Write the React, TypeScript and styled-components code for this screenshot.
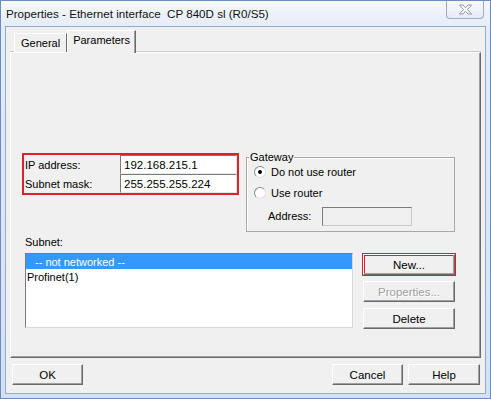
import React from "react";
import styled, { createGlobalStyle } from "styled-components";

// ---------------------------------------------------------------------------
// Global
// ---------------------------------------------------------------------------

const GlobalStyle = createGlobalStyle`
  html, body {
    margin: 0;
    padding: 0;
    background: #ffffff;
  }
  * {
    box-sizing: border-box;
  }
`;

const UI_FONT = `"Liberation Sans", Arial, sans-serif`;

// ---------------------------------------------------------------------------
// Window chrome
// ---------------------------------------------------------------------------

const Window = styled.div`
  width: 491px;
  height: 399px;
  display: flex;
  flex-direction: column;
  border: 1px solid #6a8cc2;
  padding: 0 4px 4px 4px;
  background: linear-gradient(to bottom, #f6f8fc 0, #e4ecf7 26px, #d4e1f2 100%);
  font-family: ${UI_FONT};
  font-size: 11px;
  color: #000;
`;

const TitleBar = styled.div`
  height: 25px;
  flex-shrink: 0;
  display: flex;
  align-items: center;
  padding-left: 1px;
`;

const TitleText = styled.span`
  font-size: 11.6px;
  color: #111;
  white-space: pre;
`;

const CloseButton = styled.div`
  margin-left: auto;
  margin-right: 2px;
  align-self: flex-start;
  width: 38px;
  height: 18px;
  display: flex;
  align-items: center;
  justify-content: center;
  border: 1px solid #99adc9;
  border-top: none;
  border-radius: 0 0 4px 4px;
  background: linear-gradient(to bottom, #f9fafd, #e6ecf5);
`;

const Client = styled.div`
  flex: 1;
  display: flex;
  flex-direction: column;
  background: #f0f0f0;
  border: 1px solid #92abcf;
  padding: 3px 4px 6px 4px;
`;

// ---------------------------------------------------------------------------
// Tabs
// ---------------------------------------------------------------------------

const TabStrip = styled.div`
  height: 22px;
  display: flex;
  align-items: flex-end;
  padding-left: 4px;
`;

const Tab = styled.div<{ $active?: boolean }>`
  height: ${(p) => (p.$active ? "23px" : "19px")};
  padding: ${(p) => (p.$active ? "0 5px 5px 5px" : "0 6px 1px 6px")};
  display: flex;
  align-items: center;
  background: #f0f0f0;
  border-top: 1px solid #ffffff;
  border-left: 1px solid #ffffff;
  border-right: 1px solid #696969;
  box-shadow: inset -1px 0 0 #a0a0a0, ${(p) => (p.$active ? "0 1px 0 #f0f0f0" : "none")};
  position: relative;
  z-index: ${(p) => (p.$active ? 1 : 0)};
  margin-bottom: ${(p) => (p.$active ? "-1px" : "0")};
`;

const TabPanel = styled.div`
  height: 306px;
  flex-shrink: 0;
  border-top: 1px solid #ffffff;
  border-left: 1px solid #ffffff;
  border-right: 1px solid #696969;
  border-bottom: 1px solid #696969;
  box-shadow: inset -1px -1px 0 #a0a0a0, 0 -1px 0 #c9c9c9;
  padding: 100px 0 0 11px;
  display: flex;
  flex-direction: column;
`;

// ---------------------------------------------------------------------------
// Address section
// ---------------------------------------------------------------------------

const TopRow = styled.div`
  display: flex;
  align-items: flex-start;
`;

const AddressBox = styled.div`
  width: 217px;
  height: 42px;
  border: 2px solid #d8232a;
  display: grid;
  grid-template-columns: 96px 117px;
  grid-template-rows: 19px 19px;
`;

const FieldLabel = styled.div`
  display: flex;
  align-items: center;
  padding-left: 1px;
`;

const TextInput = styled.div<{ $disabled?: boolean }>`
  display: flex;
  align-items: center;
  padding-left: 3px;
  background: ${(p) => (p.$disabled ? "#f0f0f0" : "#ffffff")};
  border-top: 1px solid #7a7a7a;
  border-left: 1px solid #7a7a7a;
  border-right: 1px solid ${(p) => (p.$disabled ? "#c8c8c8" : "#e8e8e8")};
  border-bottom: 1px solid ${(p) => (p.$disabled ? "#c8c8c8" : "#e8e8e8")};
  font-size: 11.5px;
`;

const GroupBox = styled.fieldset`
  margin: -2px 0 0 7px;
  width: 209px;
  height: 81px;
  border: 1px solid #a8a8a8;
  box-shadow: inset 1px 1px 0 #ffffff;
  padding: 0 0 0 7px;
  display: flex;
  flex-direction: column;
`;

const GroupLegend = styled.legend`
  margin-left: -5px;
  padding: 0 1px;
  line-height: 13px;
`;

const RadioRow = styled.label<{ $first?: boolean }>`
  height: 16px;
  margin-top: ${(p) => (p.$first ? "0" : "5px")};
  display: flex;
  align-items: center;
  gap: 5px;
`;

const RadioCircle = styled.span<{ $checked?: boolean }>`
  width: 12px;
  height: 12px;
  border-radius: 50%;
  background: #ffffff;
  border: 1px solid #8a8a8a;
  border-right-color: #e0e0e0;
  border-bottom-color: #e0e0e0;
  display: flex;
  align-items: center;
  justify-content: center;
  &::after {
    content: "";
    width: 4px;
    height: 4px;
    border-radius: 50%;
    background: ${(p) => (p.$checked ? "#000000" : "transparent")};
  }
`;

const AddressRow = styled.div`
  height: 20px;
  margin-top: 5px;
  display: flex;
  align-items: center;
  padding-left: 14px;
`;

const AddressLabel = styled.span`
  width: 54px;
`;

const AddressInput = styled(TextInput)`
  width: 90px;
  height: 19px;
`;

// ---------------------------------------------------------------------------
// Subnet section
// ---------------------------------------------------------------------------

const SubnetLabel = styled.div`
  margin: 4px 0 0 3px;
  line-height: 13px;
`;

const SubnetRow = styled.div`
  display: flex;
  align-items: flex-start;
  margin: 4px 0 0 3px;
`;

const ListBox = styled.div`
  width: 328px;
  height: 75px;
  background: #ffffff;
  border-top: 1px solid #7a7a7a;
  border-left: 1px solid #7a7a7a;
  border-right: 1px solid #dadada;
  border-bottom: 1px solid #dadada;
  display: flex;
  flex-direction: column;
`;

const ListItem = styled.div<{ $selected?: boolean }>`
  height: 15px;
  display: flex;
  align-items: center;
  padding-left: ${(p) => (p.$selected ? "9px" : "1px")};
  background: ${(p) => (p.$selected ? "#3399ff" : "transparent")};
  color: ${(p) => (p.$selected ? "#ffffff" : "#000000")};
  font-size: 11px;
`;

const ButtonColumn = styled.div`
  margin-left: 10px;
  display: flex;
  flex-direction: column;
  gap: 6px;
  margin-top: 1px;
`;

const Button = styled.div<{ $width?: number; $disabled?: boolean; $marked?: boolean }>`
  width: ${(p) => p.$width ?? 92}px;
  height: 21px;
  display: flex;
  align-items: center;
  justify-content: center;
  background: #f0f0f0;
  border-top: 1px solid #ffffff;
  border-left: 1px solid #ffffff;
  border-right: 1px solid #696969;
  border-bottom: 1px solid #696969;
  box-shadow: inset -1px -1px 0 #a0a0a0
    ${(p) => (p.$marked ? ", 0 0 0 1px #d8232a, inset 0 0 0 1px #d8232a" : "")};
  outline: ${(p) => (p.$marked ? "1px solid #d8232a" : "none")};
  color: ${(p) => (p.$disabled ? "#a0a0a0" : "#000000")};
  text-shadow: ${(p) => (p.$disabled ? "1px 1px 0 #ffffff" : "none")};
  font-size: 11.5px;
`;

// ---------------------------------------------------------------------------
// Dialog buttons
// ---------------------------------------------------------------------------

const DialogButtons = styled.div`
  margin-top: 6px;
  display: flex;
  align-items: center;
  gap: 5px;
  padding: 0 1px 0 2px;
`;

const Spacer = styled.div`
  flex: 1;
`;

function CloseGlyph() {
  return (
    <svg width="15" height="11" viewBox="0 0 15 11" aria-hidden="true">
      <path
        d="M1.5 1 H5 L7.5 3.8 L10 1 H13.5 L9.5 5.5 L13.5 10 H10 L7.5 7.2 L5 10 H1.5 L5.5 5.5 Z"
        fill="#ffffff"
        stroke="#7b8aa0"
        strokeWidth="0.9"
        strokeLinejoin="round"
      />
    </svg>
  );
}

// ---------------------------------------------------------------------------
// App
// ---------------------------------------------------------------------------

export default function App() {
  return (
    <>
      <GlobalStyle />
      <Window>
        <TitleBar>
          <TitleText>Properties - Ethernet interface  CP 840D sl (R0/S5)</TitleText>
          <CloseButton>
            <CloseGlyph />
          </CloseButton>
        </TitleBar>

        <Client>
          <TabStrip>
            <Tab>General</Tab>
            <Tab $active>Parameters</Tab>
          </TabStrip>

          <TabPanel>
            <TopRow>
              <AddressBox>
                <FieldLabel>IP address:</FieldLabel>
                <TextInput>192.168.215.1</TextInput>
                <FieldLabel>Subnet mask:</FieldLabel>
                <TextInput>255.255.255.224</TextInput>
              </AddressBox>

              <GroupBox>
                <GroupLegend>Gateway</GroupLegend>
                <RadioRow $first>
                  <RadioCircle $checked />
                  Do not use router
                </RadioRow>
                <RadioRow>
                  <RadioCircle />
                  Use router
                </RadioRow>
                <AddressRow>
                  <AddressLabel>Address:</AddressLabel>
                  <AddressInput $disabled />
                </AddressRow>
              </GroupBox>
            </TopRow>

            <SubnetLabel>Subnet:</SubnetLabel>
            <SubnetRow>
              <ListBox>
                <ListItem $selected>-- not networked --</ListItem>
                <ListItem>Profinet(1)</ListItem>
              </ListBox>
              <ButtonColumn>
                <Button $marked>New...</Button>
                <Button $disabled>Properties...</Button>
                <Button>Delete</Button>
              </ButtonColumn>
            </SubnetRow>
          </TabPanel>

          <DialogButtons>
            <Button $width={71}>OK</Button>
            <Spacer />
            <Button $width={71}>Cancel</Button>
            <Button $width={72}>Help</Button>
          </DialogButtons>
        </Client>
      </Window>
    </>
  );
}
